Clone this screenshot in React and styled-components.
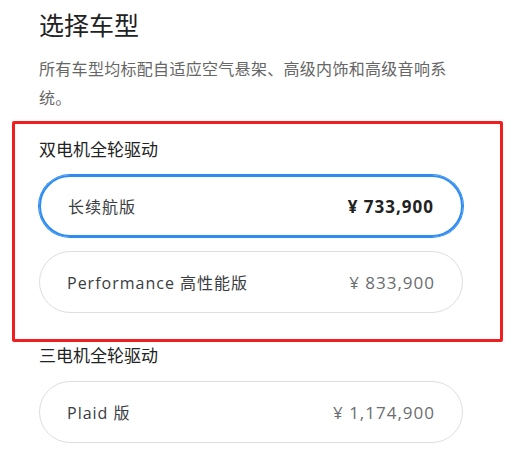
import styled, { createGlobalStyle } from "styled-components";

const GlobalStyle = createGlobalStyle`
  body {
    margin: 0;
    background: #fff;
    font-family: "Open Sans", "Noto Sans CJK SC", sans-serif;
    color: #222;
  }
`;

const models = [
  {
    group: "双电机全轮驱动",
    marked: true,
    items: [
      { name: "长续航版", price: "¥ 733,900", selected: true },
      { name: "Performance 高性能版", price: "¥ 833,900" },
    ],
  },
  {
    group: "三电机全轮驱动",
    items: [{ name: "Plaid 版", price: "¥ 1,174,900" }],
  },
];

const App = () => {
  return (
    <Page>
      <GlobalStyle />
      <Title>选择车型</Title>
      <Intro>所有车型均标配自适应空气悬架、高级内饰和高级音响系统。</Intro>
      {models.map((m) => (
        <Group key={m.group} $marked={m.marked}>
          <GroupTitle>{m.group}</GroupTitle>
          <Options>
            {m.items.map((item) => (
              <Option key={item.name} $selected={item.selected}>
                <span>{item.name}</span>
                <Price $selected={item.selected}>{item.price}</Price>
              </Option>
            ))}
          </Options>
        </Group>
      ))}
    </Page>
  );
};

const Page = styled.div`
  width: 424px;
  padding: 9px 0 0 39px;
`;

const Title = styled.h1`
  margin: 0;
  font-size: 25px;
  line-height: 32px;
  font-weight: 400;
  color: #222;
`;

const Intro = styled.p`
  margin: 14px 0 0;
  max-width: 415px;
  font-size: 16px;
  letter-spacing: 0.3px;
  line-height: 29px;
  color: #666;
`;

const Group = styled.section`
  margin: ${(p) => (p.$marked ? "8px -40px 0 -27px" : "1px 0 0")};
  padding: ${(p) => (p.$marked ? "13px 37px 26px 24px" : "0")};
  border: ${(p) => (p.$marked ? "3px solid #f01e1e" : "none")};
  border-radius: 2px;
`;

const GroupTitle = styled.h2`
  margin: 0;
  font-size: 17px;
  line-height: 26px;
  font-weight: 400;
  color: #222;
`;

const Options = styled.div`
  display: flex;
  flex-direction: column;
  gap: 14px;
  margin-top: 12px;
`;

const Option = styled.div`
  box-sizing: border-box;
  height: 62px;
  display: flex;
  align-items: center;
  justify-content: space-between;
  padding: 0 27px;
  border-radius: 31px;
  border: ${(p) => (p.$selected ? "2px solid #2e8cf0" : "1px solid #dedede")};
  box-shadow: ${(p) => (p.$selected ? "0 0 0 1px #2e8cf0" : "none")};
  font-size: 16px;
  letter-spacing: 1px;
  color: #393c41;
`;

const Price = styled.span`
  font-weight: ${(p) => (p.$selected ? 700 : 400)};
  color: ${(p) => (p.$selected ? "#222" : "#6b6d70")};
  font-size: 17px;
  letter-spacing: 1px;
`;

export default App;
